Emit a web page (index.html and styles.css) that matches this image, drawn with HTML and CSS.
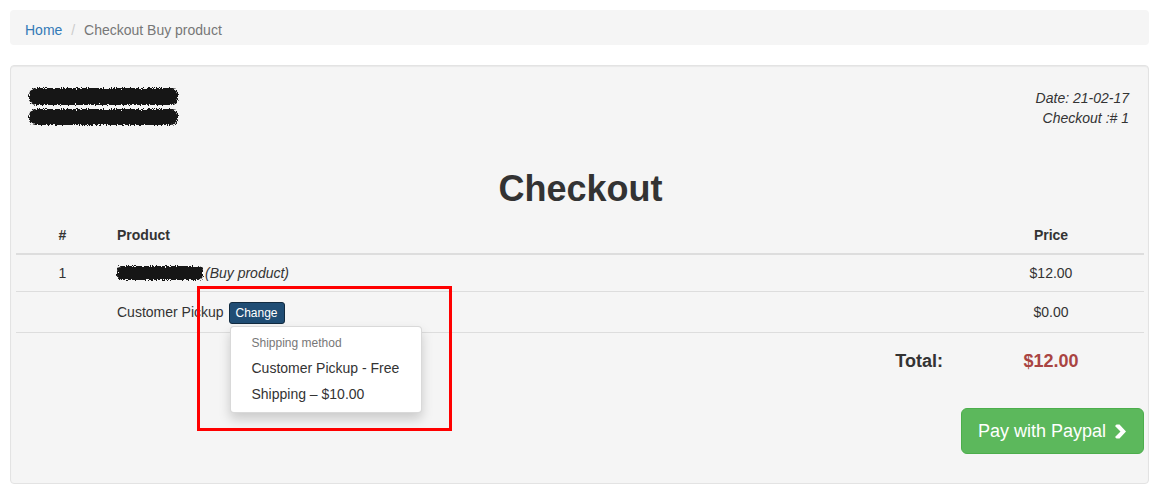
FILE: index.html
```html
<!DOCTYPE html>
<html>
<head>
<meta charset="utf-8">
<link rel="stylesheet" href="styles.css">
</head>
<body>
<svg class="defs" width="0" height="0" aria-hidden="true">
  <defs>
    <filter id="rough" x="-10%" y="-30%" width="120%" height="160%">
      <feTurbulence type="fractalNoise" baseFrequency="0.85" numOctaves="2" seed="4" result="noise"/>
      <feDisplacementMap in="SourceGraphic" in2="noise" scale="5" xChannelSelector="R" yChannelSelector="G"/>
    </filter>
  </defs>
</svg>
<div class="page">
  <ol class="breadcrumb">
    <li><a href="#">Home</a></li>
    <li class="active">Checkout Buy product</li>
  </ol>

  <div class="well">
    <div class="invoice-head">
      <div class="address">
        <svg class="redact" width="156" height="21" viewBox="0 0 156 21"><rect x="3" y="2" width="149" height="17" rx="7" fill="#141414" filter="url(#rough)"/></svg>
        <svg class="redact" width="156" height="20" viewBox="0 0 156 20"><rect x="3" y="2" width="149" height="16" rx="7" fill="#141414" filter="url(#rough)"/></svg>
      </div>
      <div class="meta">
        <em>Date: 21-02-17</em>
        <em>Checkout :# 1</em>
      </div>
    </div>

    <h1 class="title">Checkout</h1>

    <table class="table">
      <thead>
        <tr>
          <th class="c-num">#</th>
          <th class="c-prod">Product</th>
          <th class="c-price">Price</th>
        </tr>
      </thead>
      <tbody>
        <tr>
          <td class="c-num">1</td>
          <td class="c-prod"><svg class="redact-inline" width="90" height="18" viewBox="0 0 90 18"><rect x="2" y="2" width="86" height="14" rx="5" fill="#141414" filter="url(#rough)"/></svg><em>(Buy product)</em></td>
          <td class="c-price">$12.00</td>
        </tr>
        <tr class="ship-row">
          <td class="c-num"></td>
          <td class="c-prod">Customer Pickup <span class="dropdown"><button class="btn-change">Change</button>
            <ul class="dropdown-menu">
              <li class="dropdown-header">Shipping method</li>
              <li><a href="#">Customer Pickup - Free</a></li>
              <li><a href="#">Shipping – $10.00</a></li>
            </ul></span></td>
          <td class="c-price">$0.00</td>
        </tr>
        <tr class="total-row">
          <td class="c-num"></td>
          <td class="c-prod total-label"><h4>Total:</h4></td>
          <td class="c-price"><h4 class="total-amount">$12.00</h4></td>
        </tr>
      </tbody>
    </table>

    <div class="actions">
      <button class="btn-pay">Pay with Paypal <svg class="chev" width="13" height="15" viewBox="0 0 13 15"><polygon points="2.5,0.5 5.5,0.5 12,7.5 5.5,14.5 2.5,14.5 1,13 6.5,7.5 1,2" fill="#fff"/></svg></button>
    </div>
  </div>
  <div class="annotation"></div>
</div>
</body>
</html>
```

FILE: styles.css
```css
html, body {
  margin: 0;
  padding: 0;
  background: #fff;
}
body {
  font-family: "Liberation Sans", Arial, Helvetica, sans-serif;
  font-size: 14px;
  line-height: 20px;
  color: #333;
}
.defs {
  position: absolute;
  width: 0;
  height: 0;
}
.page {
  position: relative;
  padding: 10px 18px 0 10px;
}
.breadcrumb {
  list-style: none;
  margin: 0 0 20px;
  padding: 10px 15px 5px;
  background: #f5f5f5;
  border-radius: 4px;
}
.breadcrumb li {
  display: inline-block;
  color: #777;
}
.breadcrumb li + li::before {
  content: "/\00a0";
  padding: 0 5px;
  color: #ccc;
}
.breadcrumb a {
  color: #337ab7;
  text-decoration: none;
}
.well {
  background: #f5f5f5;
  border: 1px solid #e3e3e3;
  border-radius: 4px;
  box-shadow: inset 0 1px 1px rgba(0,0,0,.05);
  padding: 22px 19px 29px 17px;
}
.invoice-head {
  display: flex;
  justify-content: space-between;
}
.address {
  display: flex;
  flex-direction: column;
  margin-top: -2px;
}
.redact {
  display: block;
  margin-left: -2px;
}
.redact-inline {
  display: inline-block;
  vertical-align: -4px;
  margin-left: -2px;
}
.meta {
  display: flex;
  flex-direction: column;
  align-items: flex-end;
}
.title {
  text-align: center;
  font-size: 36px;
  font-weight: bold;
  line-height: 40px;
  margin: 41px 0 8px;
  padding-left: 4px;
  color: #333;
}
.table {
  width: calc(100% + 27px);
  margin: 0 -15px 0 -12px;
  border-collapse: collapse;
}
.table th, .table td {
  padding: 8px;
  line-height: 20px;
  vertical-align: top;
  border-top: 1px solid #ddd;
}
.table thead th {
  border-top: 0;
  border-bottom: 2px solid #ddd;
  font-weight: bold;
}
.table .ship-row td {
  padding-top: 10px;
}
.c-num { width: 77px; text-align: center; }
.c-prod { text-align: left; }
.c-price { width: 170px; text-align: center; }
.dropdown {
  position: relative;
  display: inline-block;
  margin-left: 2px;
}
.btn-change {
  font-family: inherit;
  font-size: 12px;
  line-height: 18px;
  padding: 1px 6px 1px 5px;
  color: #fff;
  background: #204d74;
  border: 1px solid #122b40;
  border-radius: 3px;
  vertical-align: baseline;
}
.dropdown-menu {
  position: absolute;
  top: 100%;
  left: 1px;
  margin: 2px 0 0;
  padding: 5px 0;
  list-style: none;
  background: #fff;
  border: 1px solid rgba(0,0,0,.15);
  border-radius: 4px;
  box-shadow: 0 6px 12px rgba(0,0,0,.175);
  white-space: nowrap;
  z-index: 2;
}
.dropdown-menu li a {
  display: block;
  padding: 3px 22px 3px 20px;
  color: #333;
  text-decoration: none;
}
.dropdown-header {
  padding: 3px 20px;
  font-size: 12px;
  line-height: 17px;
  color: #777;
}
.total-row h4 {
  margin: 10px 0;
  font-size: 18px;
  line-height: 20px;
  font-weight: bold;
}
.total-label {
  text-align: right;
  padding-right: 15px !important;
}
.total-amount {
  color: #a94442;
}
.actions {
  display: flex;
  justify-content: flex-end;
  margin: 19px -15px 0 0;
}
.btn-pay {
  font-family: inherit;
  font-size: 18px;
  line-height: 24px;
  padding: 10px 16px;
  color: #fff;
  background: #5cb85c;
  border: 1px solid #4cae4c;
  border-radius: 6px;
  display: flex;
  align-items: center;
  gap: 8px;
}
.chev {
  display: block;
}
.annotation {
  position: absolute;
  left: 197px;
  top: 286px;
  width: 249px;
  height: 139px;
  border: 3px solid #ff0000;
  pointer-events: none;
}
```
